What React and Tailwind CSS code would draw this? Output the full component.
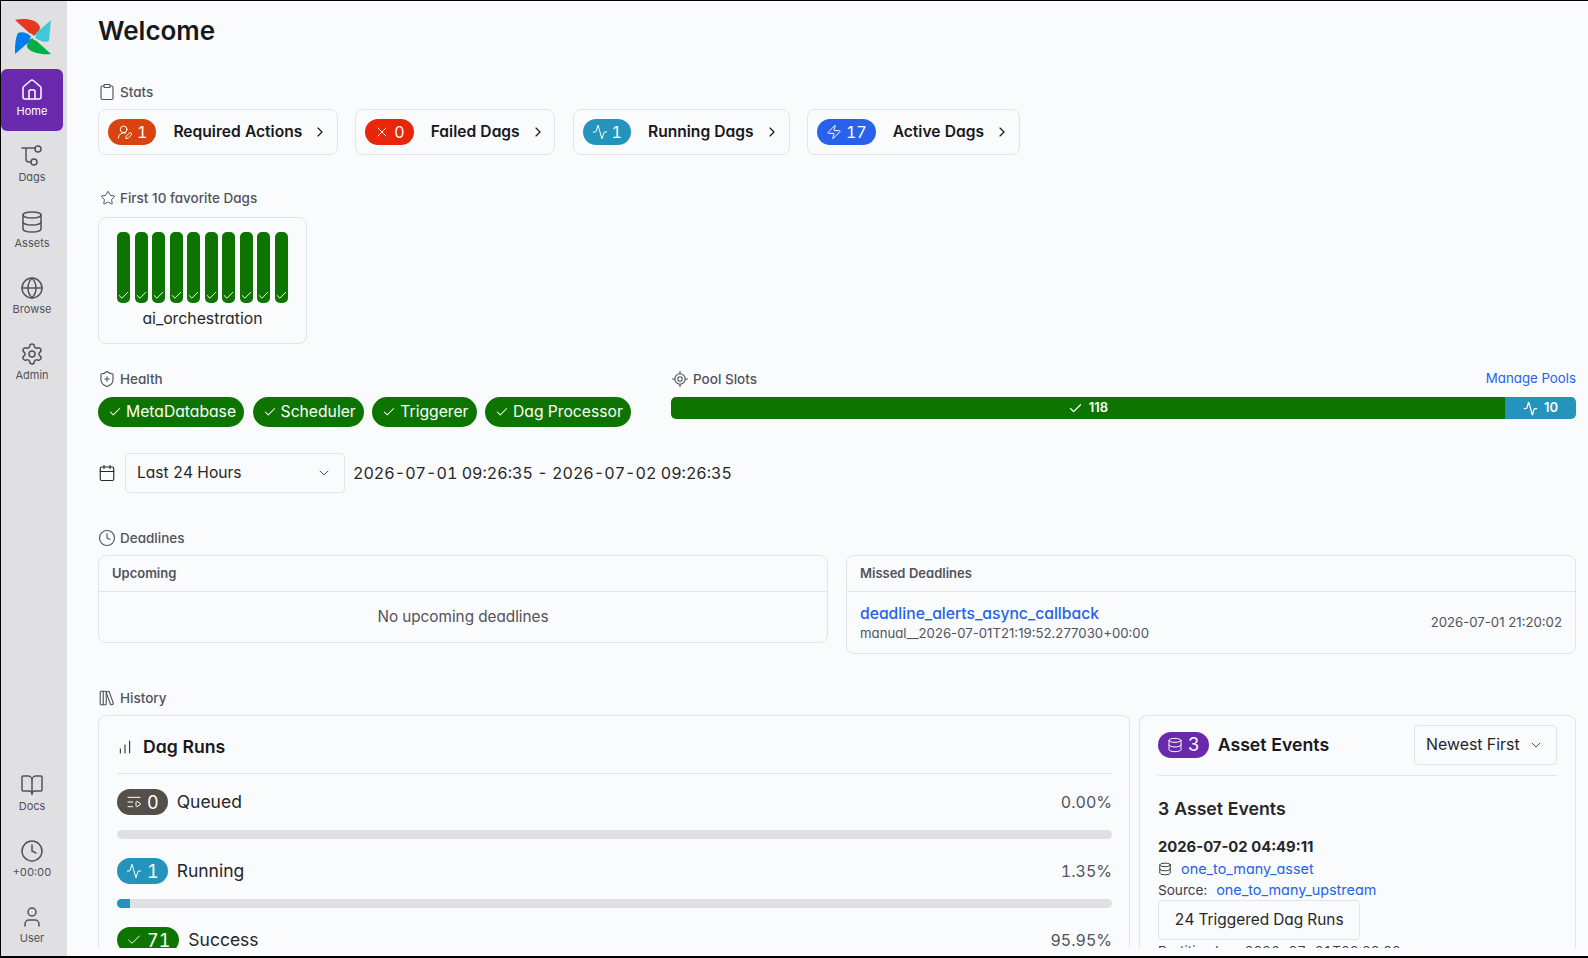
import React from "react";
import { House, Database, Globe, Settings, BookOpen, Clock, User, Clipboard, Star, ShieldPlus, LocateFixed, Calendar, LibraryBig, ChartNoAxesColumnIncreasing, UserRoundPen, X, Activity, Zap, ListVideo, Check, ChevronRight, ChevronDown } from "lucide-react";

const DagIcon = ({ className }) => (
  <svg viewBox="0 0 24 24" fill="none" stroke="currentColor" strokeWidth="1.5" strokeLinecap="round" strokeLinejoin="round" className={className}>
    <circle cx="18" cy="5" r="3" />
    <circle cx="14" cy="18" r="3" />
    <path d="M2 4h13M6 4v11a3 3 0 0 0 3 3h2" />
  </svg>
);

const Logo = () => (
  <svg viewBox="0 0 36 36" className="h-[36px] w-[36px]">
    <path fill="#e43921" d="M0 1 C9 -1 22 0 25 8 C25 12 22 15 18.5 17 C18 15.5 16.5 14 15 14.5 Z" />
    <path fill="#3fc9db" d="M36 1 L34 22 C30 24 24 22 20 18.5 C21 17 21.5 16 21 14 Z" />
    <path fill="#00ad46" d="M36 35 C28 36 15 34 12 28 C12 24 14 20 17.5 19 C18 20.5 19.5 22 21 21.5 Z" />
    <path fill="#017cee" d="M0 35 C0 28 0 20 3 14 C7 12 13 14 16 17.5 C15 19 14.5 20 15 22 Z" />
  </svg>
);

function NavItem({ icon: Icon, label, active }) {
  return (
    <div className={`flex h-[62px] w-[62px] flex-col items-center justify-center gap-[1px] rounded-md pb-[3px] text-[11px] leading-4 ${active ? "bg-[#6929ad] text-white" : "text-[#52525b]"}`}>
      <Icon className="h-[24px] w-[24px]" strokeWidth={1.5} />
      <span>{label}</span>
    </div>
  );
}

function Heading({ icon: Icon, children, className = "", iconClass = "h-[18px] w-[18px]" }) {
  return (
    <div className={`flex h-[20px] items-center gap-[4px] text-[13.5px] font-medium text-[#52525b] ${className}`}>
      <Icon className={iconClass} strokeWidth={1.5} />
      <span>{children}</span>
    </div>
  );
}

function Badge({ icon: Icon, value, color, className = "" }) {
  return (
    <span className={`inline-flex h-[26px] items-center gap-[4px] rounded-full px-[9px] text-[16px] text-white ${className}`} style={{ backgroundColor: color }}>
      <Icon className="h-[16px] w-[16px]" strokeWidth={1.5} />
      <span>{value}</span>
    </span>
  );
}

function StatCard({ icon, value, color, label, width }) {
  return (
    <div className="flex h-[46px] items-center rounded-lg border border-[#e4e4e7] pl-[9px]" style={{ width }}>
      <Badge icon={icon} value={value} color={color} />
      <span className="ml-[17px] text-[15.6px] font-semibold text-[#18181b]">{label}</span>
      <ChevronRight className="ml-[10px] h-[16px] w-[16px] text-[#18181b]" strokeWidth={1.75} />
    </div>
  );
}

function Pill({ children }) {
  return (
    <span className="inline-flex h-[30px] items-center gap-[4px] rounded-full bg-[#0d7400] pl-[10px] pr-[8px] text-[15.7px] text-white">
      <Check className="h-[14px] w-[14px]" strokeWidth={1.75} />
      {children}
    </span>
  );
}

function Bar() {
  return (
    <div className="flex h-[71px] w-[13px] items-end justify-center rounded-[5px] bg-[#0d7400]">
      <Check className="mb-[1px] h-[13px] w-[13px] text-white" strokeWidth={1.75} />
    </div>
  );
}

function RunRow({ icon, value, color, label, pct, fill, fillColor }) {
  return (
    <div>
      <div className="flex h-[26px] items-center justify-between">
        <div className="flex items-center gap-[9px]">
          <Badge icon={icon} value={value} color={color} className="gap-[5px] text-[18px]" />
          <span className="text-[17.5px] text-[#27272a]">{label}</span>
        </div>
        <span className="text-[16px] text-[#52525b]">{pct}</span>
      </div>
      <div className="mb-[19px] mt-[15px] h-[9px] overflow-hidden rounded-full bg-[#e0e0e2]">
        {fill && <div className="h-full" style={{ width: fill, backgroundColor: fillColor }} />}
      </div>
    </div>
  );
}

export default function App() {
  return (
    <div className="flex h-[958px] w-[1588px] overflow-hidden border-b-[2px] border-l-[1px] border-t-[1px] border-black bg-[#fafbfd] font-['Inter',sans-serif] [font-feature-settings:'cv11','tnum']">
      <aside className="flex w-[66px] shrink-0 flex-col items-start overflow-hidden bg-[#e0e0e2]">
        <div className="flex h-[68px] w-[62px] shrink-0 items-center justify-center pl-[1px] pt-[3px]"><Logo /></div>
        <div className="flex flex-col gap-[4px]">
          <NavItem icon={House} label="Home" active />
          <NavItem icon={DagIcon} label="Dags" />
          <NavItem icon={Database} label="Assets" />
          <NavItem icon={Globe} label="Browse" />
          <NavItem icon={Settings} label="Admin" />
        </div>
        <div className="mb-[-2px] mt-auto flex flex-col gap-[4px]">
          <NavItem icon={BookOpen} label="Docs" />
          <NavItem icon={Clock} label="+00:00" />
          <NavItem icon={User} label="User" />
        </div>
      </aside>
      <main className="flex h-[947px] min-w-0 flex-1 flex-col overflow-hidden pl-[31px] pr-[12px]">
        <h1 className="mt-[12px] h-[36px] text-[26px] font-semibold leading-[36px] text-[#18181b]">Welcome</h1>

        <Heading icon={Clipboard} className="mt-[32px] pt-[2px]">Stats</Heading>
        <div className="mt-[8px] flex gap-[17.3px]">
          <StatCard icon={UserRoundPen} value="1" color="#d9430d" label="Required Actions" width={240} />
          <StatCard icon={X} value="0" color="#e7260a" label="Failed Dags" width={200} />
          <StatCard icon={Activity} value="1" color="#2494bd" label="Running Dags" width={217} />
          <StatCard icon={Zap} value="17" color="#2862ea" label="Active Dags" width={213} />
        </div>

        <Heading icon={Star} iconClass="ml-[2px] h-[16px] w-[16px]" className="mt-[33px] [font-feature-settings:'cv11']">First 10 favorite Dags</Heading>
        <div className="mt-[9px] flex h-[127px] w-[209px] flex-col items-center rounded-lg border border-[#e4e4e7] pt-[14px]">
          <div className="flex gap-[4.55px]">
            {Array.from({ length: 10 }).map((_, i) => <Bar key={i} />)}
          </div>
          <span className="mt-[4px] text-[15.8px] text-[#27272a]">ai_orchestration</span>
        </div>

        <div className="mt-[25px] flex gap-[36px]">
          <div className="w-[537px] shrink-0">
            <Heading icon={ShieldPlus}>Health</Heading>
            <div className="mt-[8px] flex gap-[8.5px]">
              <Pill>MetaDatabase</Pill>
              <Pill>Scheduler</Pill>
              <Pill>Triggerer</Pill>
              <Pill>Dag Processor</Pill>
            </div>
          </div>
          <div className="min-w-0 flex-1">
            <div className="flex items-center justify-between">
              <Heading icon={LocateFixed}>Pool Slots</Heading>
              <span className="text-[13.3px] text-[#2563eb]">Manage Pools</span>
            </div>
            <div className="mt-[8px] flex h-[22px] overflow-hidden rounded-[5px] text-[13px] font-semibold text-white [font-feature-settings:'cv11']">
              <div className="flex flex-1 items-center justify-center gap-[6px] bg-[#0d7400]"><Check className="h-[15px] w-[15px]" strokeWidth={2} />118</div>
              <div className="flex w-[71px] items-center justify-center gap-[6px] bg-[#2494bd]"><Activity className="h-[15px] w-[15px]" strokeWidth={2} />10</div>
            </div>
          </div>
        </div>

        <div className="mt-[26px] flex items-center">
          <Calendar className="h-[18px] w-[18px] text-[#27272a]" strokeWidth={1.5} />
          <div className="ml-[9px] flex h-[40px] w-[220px] items-center justify-between rounded-[4px] border border-[#e4e4e7] pl-[11px] pr-[12px] text-[15.6px] text-[#27272a]">
            Last 24 Hours
            <ChevronDown className="h-[16px] w-[16px] text-[#52525b]" strokeWidth={1.5} />
          </div>
          <span className="ml-[8px] text-[16.1px] text-[#27272a]">2026-07-01 09:26:35 - 2026-07-02 09:26:35</span>
        </div>

        <Heading icon={Clock} className="mt-[34px] pt-[2px]">Deadlines</Heading>
        <div className="mt-[8px] flex items-start gap-[18px]">
          <div className="h-[88px] flex-1 rounded-lg border border-[#e4e4e7]">
            <div className="flex h-[36px] items-center border-b border-[#e4e4e7] px-[13px] text-[13px] font-semibold text-[#52525b]">Upcoming</div>
            <div className="flex h-[50px] items-center justify-center text-[15.3px] text-[#52525b]">No upcoming deadlines</div>
          </div>
          <div className="h-[99px] flex-1 rounded-lg border border-[#e4e4e7]">
            <div className="flex h-[36px] items-center border-b border-[#e4e4e7] px-[13px] text-[13px] font-semibold text-[#52525b]">Missed Deadlines</div>
            <div className="flex h-[61px] items-center justify-between px-[13px]">
              <div>
                <div className="text-[15.7px] font-medium leading-[20px] text-[#2563eb]">deadline_alerts_async_callback</div>
                <div className="text-[13.2px] leading-[18px] text-[#52525b] [font-feature-settings:'cv11']">manual__2026-07-01T21:19:52.277030+00:00</div>
              </div>
              <span className="text-[13.2px] text-[#52525b] [font-feature-settings:'cv11']">2026-07-01 21:20:02</span>
            </div>
          </div>
        </div>

        <Heading icon={LibraryBig} className="mt-[33px] pt-[2px]">History</Heading>
        <div className="mt-[8px] flex min-h-0 flex-1 gap-[9px]">
          <div className="w-[1032px] shrink-0 overflow-hidden rounded-t-lg border-x border-t border-[#e4e4e7] pl-[18px] pr-[17px] pt-[19px]">
            <div className="flex h-[24px] items-center gap-[10px] text-[17.6px] font-semibold text-[#18181b]">
              <ChartNoAxesColumnIncreasing className="h-[16px] w-[16px]" strokeWidth={1.5} />
              Dag Runs
            </div>
            <div className="mt-[14px] border-t border-[#e4e4e7] pt-[15px]">
              <RunRow icon={ListVideo} value="0" color="#544f49" label="Queued" pct="0.00%" />
              <RunRow icon={Activity} value="1" color="#2494bd" label="Running" pct="1.35%" fill="1.35%" fillColor="#2494bd" />
              <RunRow icon={Check} value="71" color="#0d7400" label="Success" pct="95.95%" />
            </div>
          </div>
          <div className="min-w-0 flex-1 overflow-hidden rounded-t-lg border-x border-t border-[#e4e4e7] px-[18px] pt-[9px]">
            <div className="flex h-[40px] items-center justify-between">
              <div className="flex items-center gap-[9px]">
                <Badge icon={Database} value="3" color="#6929ad" className="gap-[5px] text-[18px]" />
                <span className="text-[17.7px] font-semibold text-[#18181b]">Asset Events</span>
              </div>
              <div className="flex h-[40px] w-[143px] items-center justify-between rounded-[4px] border border-[#e4e4e7] pl-[11px] pr-[12px] text-[15.9px] text-[#27272a]">
                Newest First
                <ChevronDown className="h-[16px] w-[16px] text-[#52525b]" strokeWidth={1.5} />
              </div>
            </div>
            <div className="mt-[10px] border-t border-[#e4e4e7] pt-[21px]">
              <div className="text-[17.7px] font-semibold leading-[24px] text-[#27272a]">3 Asset Events</div>
              <div className="mt-[16px] text-[14.8px] font-bold leading-[20px] text-[#27272a] [font-feature-settings:'cv11']">2026-07-02 04:49:11</div>
              <div className="mt-[2px] flex h-[20px] items-center text-[14.4px] text-[#2563eb]">
                <Database className="h-[14px] w-[14px] text-[#27272a]" strokeWidth={1.5} />
                <span className="ml-[9px]">one_to_many_asset</span>
              </div>
              <div className="mt-[1px] flex h-[20px] items-center text-[14.4px]">
                <span className="text-[13.6px] text-[#3f3f46]">Source:</span>
                <span className="ml-[9px] text-[#2563eb]">one_to_many_upstream</span>
              </div>
              <div className="flex h-[40px] w-[202px] items-center justify-center rounded-[4px] border border-[#e4e4e7] text-[15.4px] text-[#27272a]">24 Triggered Dag Runs</div>
              <div className="mt-[1px] text-[13.5px] leading-[20px] text-[#3f3f46]">Partition key: 2026-07-01T00:00:00</div>
            </div>
          </div>
        </div>
      </main>
    </div>
  );
}
